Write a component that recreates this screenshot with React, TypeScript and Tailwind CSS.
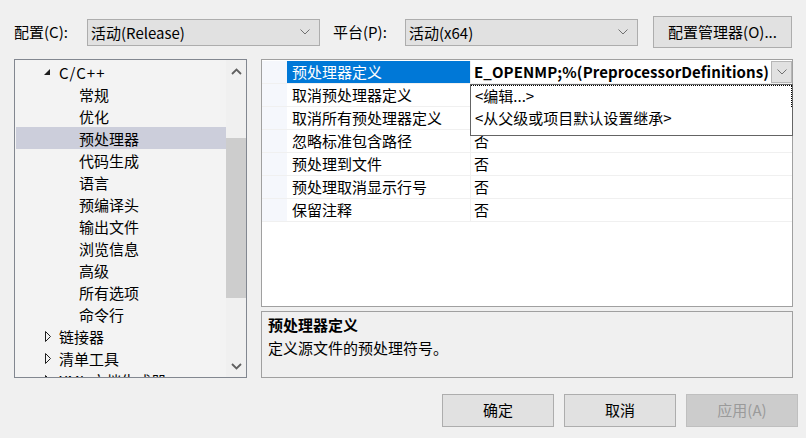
import React from 'react';

const F = "font-['Noto_Sans_CJK_SC','Noto_Sans',sans-serif]";

function Chev({ up = false, className = '' }: { up?: boolean; className?: string }) {
  return (
    <svg width="10" height="6" viewBox="0 0 10 6" className={className}>
      <polyline
        points={up ? '0.5,5.5 5,1 9.5,5.5' : '0.5,0.5 5,5 9.5,0.5'}
        fill="none"
        stroke="currentColor"
        strokeWidth="1"
      />
    </svg>
  );
}

function BoldChev({ up = false }: { up?: boolean }) {
  return (
    <svg width="11" height="7" viewBox="0 0 11 7">
      <polyline
        points={up ? '1,6 5.5,1.5 10,6' : '1,1 5.5,5.5 10,1'}
        fill="none"
        stroke="#606060"
        strokeWidth="1.8"
      />
    </svg>
  );
}

function Combo({ text, w }: { text: string; w: string }) {
  return (
    <div
      className={`${w} h-[27px] bg-[#e1e1e1] border border-[#adadad] flex items-center pl-[3px] pr-[9px] justify-between`}
    >
      <span className="text-[15px] text-black leading-none">{text}</span>
      <Chev className="text-[#707070]" />
    </div>
  );
}

function Btn({ text, disabled = false, w = 'w-[112px]', h = 'h-[33px]' }: { text: string; disabled?: boolean; w?: string; h?: string }) {
  return (
    <div
      className={`${w} ${h} flex items-center justify-center border text-[15px] ${
        disabled ? 'bg-[#cccccc] border-[#bfbfbf] text-[#9a9a9a]' : 'bg-[#e1e1e1] border-[#adadad] text-black'
      }`}
    >
      {text}
    </div>
  );
}

const treeRows: { label: string; kind: 'open' | 'closed' | 'child'; sel?: boolean }[] = [
  { label: 'C/C++', kind: 'open' },
  { label: '常规', kind: 'child' },
  { label: '优化', kind: 'child' },
  { label: '预处理器', kind: 'child', sel: true },
  { label: '代码生成', kind: 'child' },
  { label: '语言', kind: 'child' },
  { label: '预编译头', kind: 'child' },
  { label: '输出文件', kind: 'child' },
  { label: '浏览信息', kind: 'child' },
  { label: '高级', kind: 'child' },
  { label: '所有选项', kind: 'child' },
  { label: '命令行', kind: 'child' },
  { label: '链接器', kind: 'closed' },
  { label: '清单工具', kind: 'closed' },
  { label: 'XML 文档生成器', kind: 'closed' },
];

const gridRows: [string, string][] = [
  ['预处理器定义', 'E_OPENMP;%(PreprocessorDefinitions)'],
  ['取消预处理器定义', ''],
  ['取消所有预处理器定义', ''],
  ['忽略标准包含路径', '否'],
  ['预处理到文件', '否'],
  ['预处理取消显示行号', '否'],
  ['保留注释', '否'],
];

export default function App() {
  return (
    <div className={`${F} w-[806px] h-[438px] bg-[#f0f0f0] flex flex-col overflow-hidden text-black`}>
      {/* top bar */}
      <div className="flex items-center h-[32px] mt-[16px] pl-[14px]">
        <div className="w-[73px] text-[15px]">配置(C):</div>
        <Combo text="活动(Release)" w="w-[233px]" />
        <div className="ml-[13px] w-[72px] text-[15px]">平台(P):</div>
        <Combo text="活动(x64)" w="w-[233px]" />
        <div className="ml-[15px]">
          <Btn text="配置管理器(O)..." w="w-[139px]" h="h-[32px]" />
        </div>
      </div>

      {/* main */}
      <div className="flex mt-[11px] pl-[14px]">
        {/* tree */}
        <div className="w-[233px] h-[319px] border border-[#828790] bg-[#f3f3f3] flex">
          <div className="flex-1 overflow-hidden pt-[1px]">
            {treeRows.map((r, i) => (
              <div
                key={i}
                className={`h-[22px] flex items-center text-[15px] whitespace-nowrap ml-[1px] ${
                  r.sel ? 'bg-[#cccedb]' : ''
                } ${r.kind === 'child' ? 'pl-[63px]' : 'pl-[27px]'}`}
              >
                {r.kind === 'open' && (
                  <svg width="16" height="10" viewBox="0 0 16 10" className="shrink-0">
                    <polygon points="7,8 7,8 1,8 7,2" fill="#1e1e1e" />
                  </svg>
                )}
                {r.kind === 'closed' && (
                  <svg width="16" height="11" viewBox="0 0 16 11" className="shrink-0">
                    <polygon points="2.5,0.5 7.5,5.5 2.5,10.5" fill="none" stroke="#1e1e1e" strokeWidth="1" />
                  </svg>
                )}
                <span className={`leading-none ${r.kind === 'open' ? 'tracking-[1px]' : ''}`}>{r.label}</span>
              </div>
            ))}
          </div>
          <div className="w-[20px] flex flex-col items-stretch bg-[#f0f0f0]">
            <div className="h-[22px] flex items-center justify-center">
              <BoldChev up />
            </div>
            <div className="h-[56px]" />
            <div className="h-[160px] bg-[#cdcdcd]" />
            <div className="flex-1" />
            <div className="h-[22px] flex items-center justify-center">
              <BoldChev />
            </div>
          </div>
        </div>

        {/* right column */}
        <div className="ml-[14px] w-[532px] flex flex-col gap-[4px]">
          <div className="relative h-[248px] border border-[#a0a0a0] bg-white pt-[1px]">
            {gridRows.map(([n, v], i) => (
              <div key={i} className="flex h-[23px] border-b border-[#f0f0f0] text-[15px]">
                <div className="w-[25px] bg-[#f5f7fc]" />
                <div
                  className={`w-[184px] pl-[5px] flex items-center whitespace-nowrap border-r border-[#f0f0f0] ${
                    i === 0 ? 'bg-[#0078d7] text-white border-[#0078d7]' : ''
                  }`}
                >
                  {n}
                </div>
                <div className="flex-1 flex items-center pl-[3px] min-w-0">
                  {i === 0 ? (
                    <>
                      <div className="flex-1 overflow-hidden whitespace-nowrap font-bold text-[15px] tracking-[0.1px]">
                        {v}
                      </div>
                      <div className="w-[21px] h-[22px] bg-[#e1e1e1] border border-[#b6b6b6] flex items-center justify-center text-[#707070] self-start">
                        <Chev />
                      </div>
                    </>
                  ) : (
                    <span>{v}</span>
                  )}
                </div>
              </div>
            ))}
            {/* dropdown popup */}
            <div className="absolute left-[208px] top-[24px] w-[323px] h-[52px] bg-white border border-[#646464] text-[15px]">
              <div className="h-[22px] flex items-center pl-[4px] border-t border-r border-dotted border-black">
                &lt;编辑...&gt;
              </div>
              <div className="h-[22px] flex items-center pl-[4px]">&lt;从父级或项目默认设置继承&gt;</div>
            </div>
          </div>
          <div className="h-[67px] border border-[#a0a0a0] bg-[#f0f0f0] pl-[6px] pt-[2px]">
            <div className="h-[22px] flex items-center font-bold text-[15px]">预处理器定义</div>
            <div className="h-[24px] flex items-center text-[15px]">定义源文件的预处理符号。</div>
          </div>
        </div>
      </div>

      {/* bottom buttons */}
      <div className="flex justify-end gap-[10px] pr-[8px] mt-[16px]">
        <Btn text="确定" />
        <Btn text="取消" />
        <Btn text="应用(A)" disabled />
      </div>
    </div>
  );
}
